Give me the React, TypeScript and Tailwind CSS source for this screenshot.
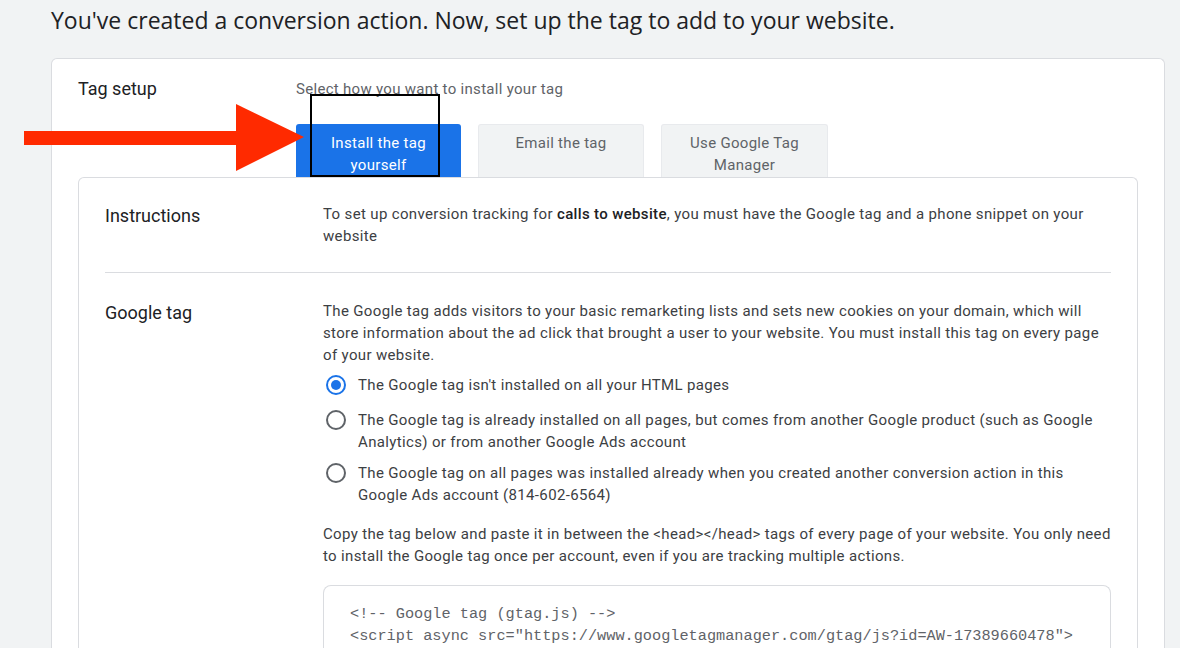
import React from 'react';

const body = { fontFamily: 'Roboto, "Liberation Sans", sans-serif' };

function Radio({ checked }: { checked?: boolean }) {
  return (
    <span
      className={`mt-[1px] flex h-5 w-5 flex-shrink-0 items-center justify-center rounded-full border-2 ${
        checked ? 'border-[#1a73e8]' : 'border-[#5f6368]'
      }`}
    >
      {checked && <span className="h-[10px] w-[10px] rounded-full bg-[#1a73e8]" />}
    </span>
  );
}

function RedArrow() {
  return (
    <svg className="absolute left-[24px] top-[104px]" width="282" height="68" viewBox="0 0 282 68">
      <rect x="0" y="27" width="214" height="14" fill="#ff2a00" />
      <polygon points="212,0 280,33 212,67" fill="#ff2a00" />
    </svg>
  );
}

export default function App() {
  const options = [
    { checked: true, text: "The Google tag isn't installed on all your HTML pages" },
    {
      checked: false,
      text: 'The Google tag is already installed on all pages, but comes from another Google product (such as Google Analytics) or from another Google Ads account',
    },
    {
      checked: false,
      text: 'The Google tag on all pages was installed already when you created another conversion action in this Google Ads account (814-602-6564)',
    },
  ];

  return (
    <div className="relative h-[648px] w-[1180px] overflow-hidden bg-[#f1f3f4] pl-[51px] pr-[15px]" style={body}>
      <h1
        className="pt-[5px] text-[23px] leading-[30px] text-[#202124]"
        style={{ fontFamily: '"Open Sans", "Noto Sans", sans-serif' }}
      >
        You've created a conversion action. Now, set up the tag to add to your website.
      </h1>

      <div className="mt-[23px] rounded-t-[6px] border border-b-0 border-[#dadce0] bg-white pl-[26px] pr-[26px]">
        {/* tag setup header */}
        <div className="flex pt-[18px]">
          <div className="w-[218px] text-[18px] leading-[24px] text-[#202124]">Tag setup</div>
          <div className="text-[15px] leading-[24px] tracking-[0.3px] text-[#5f6368]">
            Select how you want to install your tag
          </div>
        </div>

        {/* tabs */}
        <div className="relative ml-[218px] mt-[23px] flex h-[53px] gap-[17px] text-[15px] leading-[22px] tracking-[0.3px]">
          <div className="w-[165px] rounded-t-[3px] bg-[#1a73e8] pt-[8px] text-center text-white">
            Install the tag
            <br />
            yourself
          </div>
          <div className="w-[166px] rounded-t-[3px] border border-b-0 border-[#e8eaed] bg-[#f1f3f4] pt-[7px] text-center text-[#5f6368]">
            Email the tag
          </div>
          <div className="w-[167px] rounded-t-[3px] border border-b-0 border-[#e8eaed] bg-[#f1f3f4] pt-[7px] text-center text-[#5f6368]">
            Use Google Tag
            <br />
            Manager
          </div>
          <div className="absolute left-[14px] top-[-30px] h-[83px] w-[130px] border-2 border-black" />
        </div>

        {/* inner card */}
        <div className="h-[480px] rounded-t-[6px] border border-b-0 border-[#dadce0] bg-white px-[26px]">
          <div className="flex border-b border-[#dadce0] pb-[25px] pt-[25px]">
            <div className="w-[218px] pt-[1px] text-[18px] leading-[24px] text-[#202124]">Instructions</div>
            <p className="flex-1 text-[15px] leading-[22px] tracking-[0.35px] text-[#3c4043]">
              To set up conversion tracking for <b className="font-medium text-[#202124]">calls to website</b>, you must
              have the Google tag and a phone snippet on your website
            </p>
          </div>

          <div className="flex pt-[27px]">
            <div className="w-[218px] pt-[1px] text-[18px] leading-[24px] text-[#202124]">Google tag</div>
            <div className="flex-1 text-[15px] leading-[22px] tracking-[0.35px] text-[#3c4043]">
              <p>
                The Google tag adds visitors to your basic remarketing lists and sets new cookies on your domain, which
                will store information about the ad click that brought a user to your website. You must install this tag
                on every page of your website.
              </p>

              <div className="mt-[8px] flex flex-col gap-[9px]">
                {options.map((o, i) => (
                  <label key={i} className={`flex gap-[12px] pl-[3px] ${i === 0 ? 'pb-[4px]' : ''}`}>
                    <Radio checked={o.checked} />
                    <span className="pr-[6px]">{o.text}</span>
                  </label>
                ))}
              </div>

              <p className="mt-[17px]">
                Copy the tag below and paste it in between the &lt;head&gt;&lt;/head&gt; tags of every page of your
                website. You only need to install the Google tag once per account, even if you are tracking multiple
                actions.
              </p>

              <div
                className="mt-[18px] h-[100px] rounded-t-[8px] border border-b-0 border-[#dadce0] px-[26px] pt-[17px] text-[15.25px] leading-[22px] tracking-normal text-[#5f6368]"
                style={{ fontFamily: '"Liberation Mono", "DejaVu Sans Mono", monospace' }}
              >
                <div className="whitespace-pre">{'<!-- Google tag (gtag.js) -->'}</div>
                <div className="whitespace-pre">
                  {'<script async src="https://www.googletagmanager.com/gtag/js?id=AW-17389660478">'}
                </div>
              </div>
            </div>
          </div>
        </div>
      </div>

      <RedArrow />
    </div>
  );
}
